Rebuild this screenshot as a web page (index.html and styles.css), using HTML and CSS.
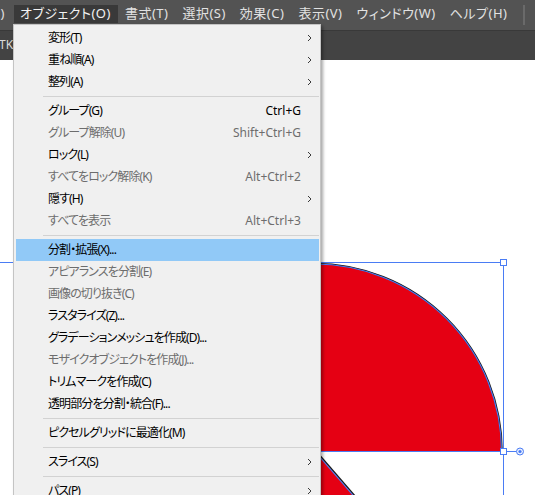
FILE: index.html
```html
<!DOCTYPE html>
<html lang="ja">
<head>
<meta charset="utf-8">
<title>Illustrator Object menu</title>
<link rel="stylesheet" href="styles.css">
</head>
<body>
<div class="app">
  <nav class="menubar">
    <span class="mb-item mb-cut"><span class="mb-cut-text">編集(E)</span></span>
    <span class="mb-item mb-active">オブジェクト(O)</span>
    <span class="mb-item">書式(T)</span>
    <span class="mb-item">選択(S)</span>
    <span class="mb-item">効果(C)</span>
    <span class="mb-item">表示(V)</span>
    <span class="mb-item">ウィンドウ(W)</span>
    <span class="mb-item">ヘルプ(H)</span>
    <span class="mb-sep"></span>
  </nav>
  <div class="tabbar"><span class="tab-title">TK/</span></div>
  <div class="canvas">
    <svg class="art" width="535" height="435" viewBox="0 0 535 435">
      <!-- lower shape -->
      <path class="fill" d="M315.4 391.5 L353.5 435.5 L200 435.5 L200 391.5 Z"/>
      <line class="edge-k" x1="316.4" y1="391.5" x2="354.5" y2="435.5"/>
      <line class="edge-b" x1="315.4" y1="392" x2="353.2" y2="435.5"/>
      <!-- upper quarter shape -->
      <path class="fill" d="M100 203.5 L314 203.5 A188 188 0 0 1 502 391.5 L100 391.5 Z"/>
      <path class="edge-k" d="M100 203.5 L314 203.5 A188 188 0 0 1 502 391.5"/>
      <path class="edge-b" d="M100 204 L314 204 A187.5 187.5 0 0 1 501.5 391.5 L100 391.5"/>
      <!-- bounding box -->
      <line class="bbox" x1="0" y1="202.5" x2="500.5" y2="202.5"/>
      <line class="bbox" x1="503.5" y1="205.5" x2="503.5" y2="388.5"/>
      <line class="bbox" x1="503.5" y1="394.5" x2="503.5" y2="435"/>
      <line class="bbox" x1="506.5" y1="391.5" x2="516.5" y2="391.5"/>
      <rect class="handle" x="500.5" y="199.5" width="6" height="6"/>
      <rect class="handle" x="500.5" y="388.5" width="6" height="6"/>
      <circle class="widget" cx="520" cy="391.5" r="3.5"/>
      <circle class="widget-dot" cx="520" cy="391.5" r="1.6"/>
    </svg>
  </div>

  <div class="dropdown">
    <div class="mi"><span class="ml">変形(T)</span><span class="ms"></span><span class="ma"><svg class="chev" viewBox="0 0 5 8"><path d="M1 1l3 3-3 3"/></svg></span></div>
    <div class="mi"><span class="ml">重ね順(A)</span><span class="ms"></span><span class="ma"><svg class="chev" viewBox="0 0 5 8"><path d="M1 1l3 3-3 3"/></svg></span></div>
    <div class="mi"><span class="ml">整列(A)</span><span class="ms"></span><span class="ma"><svg class="chev" viewBox="0 0 5 8"><path d="M1 1l3 3-3 3"/></svg></span></div>
    <div class="msep"></div>
    <div class="mi"><span class="ml">グループ(G)</span><span class="ms">Ctrl+G</span><span class="ma"></span></div>
    <div class="mi dis"><span class="ml">グループ解除(U)</span><span class="ms">Shift+Ctrl+G</span><span class="ma"></span></div>
    <div class="mi"><span class="ml">ロック(L)</span><span class="ms"></span><span class="ma"><svg class="chev" viewBox="0 0 5 8"><path d="M1 1l3 3-3 3"/></svg></span></div>
    <div class="mi dis"><span class="ml">すべてをロック解除(K)</span><span class="ms">Alt+Ctrl+2</span><span class="ma"></span></div>
    <div class="mi"><span class="ml">隠す(H)</span><span class="ms"></span><span class="ma"><svg class="chev" viewBox="0 0 5 8"><path d="M1 1l3 3-3 3"/></svg></span></div>
    <div class="mi dis"><span class="ml">すべてを表示</span><span class="ms">Alt+Ctrl+3</span><span class="ma"></span></div>
    <div class="msep"></div>
    <div class="mi hot"><span class="ml">分割・拡張(X)...</span><span class="ms"></span><span class="ma"></span></div>
    <div class="mi dis"><span class="ml">アピアランスを分割(E)</span><span class="ms"></span><span class="ma"></span></div>
    <div class="mi dis"><span class="ml">画像の切り抜き(C)</span><span class="ms"></span><span class="ma"></span></div>
    <div class="mi"><span class="ml">ラスタライズ(Z)...</span><span class="ms"></span><span class="ma"></span></div>
    <div class="mi"><span class="ml">グラデーションメッシュを作成(D)...</span><span class="ms"></span><span class="ma"></span></div>
    <div class="mi dis"><span class="ml">モザイクオブジェクトを作成(J)...</span><span class="ms"></span><span class="ma"></span></div>
    <div class="mi"><span class="ml">トリムマークを作成(C)</span><span class="ms"></span><span class="ma"></span></div>
    <div class="mi"><span class="ml">透明部分を分割・統合(F)...</span><span class="ms"></span><span class="ma"></span></div>
    <div class="msep"></div>
    <div class="mi"><span class="ml">ピクセルグリッドに最適化(M)</span><span class="ms"></span><span class="ma"></span></div>
    <div class="msep"></div>
    <div class="mi"><span class="ml">スライス(S)</span><span class="ms"></span><span class="ma"><svg class="chev" viewBox="0 0 5 8"><path d="M1 1l3 3-3 3"/></svg></span></div>
    <div class="msep"></div>
    <div class="mi"><span class="ml">パス(P)</span><span class="ms"></span><span class="ma"><svg class="chev" viewBox="0 0 5 8"><path d="M1 1l3 3-3 3"/></svg></span></div>
  </div>
</div>
</body>
</html>
```

FILE: styles.css
```css
* { box-sizing: border-box; }

html, body {
  margin: 0;
  padding: 0;
  background: #ffffff;
}

body {
  font-family: "Noto Sans", "Noto Sans CJK JP", sans-serif;
}

.app {
  position: relative;
  width: 535px;
  height: 495px;
  overflow: hidden;
  display: flex;
  flex-direction: column;
}

/* ---------- menu bar ---------- */
.menubar {
  flex: none;
  height: 30px;
  background: #535353;
  display: flex;
  align-items: flex-start;
  padding-top: 5px;
  white-space: nowrap;
  font-feature-settings: "palt";
}

.mb-item {
  flex: none;
  height: 18px;
  line-height: 17px;
  padding: 0 7px 0 7px;
  font-size: 13px;
  letter-spacing: 0.5px;
  color: #e2e2e2;
}

.mb-cut {
  width: 14px;
  padding: 0 9px 0 0;
  display: flex;
  justify-content: flex-end;
  overflow: hidden;
}

.mb-cut-text { flex: none; }

.mb-active {
  background: #393939;
  color: #f2f2f2;
  padding-left: 6px;
}

.mb-sep {
  flex: none;
  width: 2px;
  height: 20px;
  margin-left: auto;
  margin-right: 10px;
  background: #6a6a6a;
}

/* ---------- document tab bar ---------- */
.tabbar {
  flex: none;
  height: 30px;
  background: #434343;
  border-top: 1px solid #393939;
  padding: 2px 0 0 0;
  line-height: 20px;
  white-space: nowrap;
  overflow: hidden;
}

.tab-title {
  display: inline-block;
  margin-left: -1px;
  font-size: 12px;
  color: #dadada;
}

/* ---------- art board ---------- */
.canvas {
  flex: 1;
  background: #ffffff;
}

.art { display: block; }

.fill { fill: #e50013; stroke: none; }
.edge-k { fill: none; stroke: #1a1a1a; stroke-width: 1.6; }
.edge-b { fill: none; stroke: #4a7cf4; stroke-width: 1.1; }
.bbox { stroke: #4a7cf4; stroke-width: 1; }
.handle { fill: #ffffff; stroke: #4a7cf4; stroke-width: 1; }
.widget { fill: #e6edff; stroke: #4a7cf4; stroke-width: 1; }
.widget-dot { fill: #4a7cf4; }

/* ---------- drop-down menu ---------- */
.dropdown {
  position: absolute;
  left: 13px;
  top: 24px;
  width: 308px;
  background: #f0f0f0;
  border: 1px solid #c4c4c4;
  box-shadow: 2px 2px 3px rgba(0, 0, 0, 0.35);
  padding: 2px 0 3px 0;
  font-feature-settings: "palt";
}

.mi {
  display: grid;
  grid-template-columns: 1fr auto 18px;
  align-items: center;
  height: 22px;
  margin: 0 1px 0 2px;
  padding-left: 32px;
  font-size: 12px;
  line-height: 22px;
  color: #000000;
  white-space: nowrap;
}

.ml { letter-spacing: -0.9px; }

.mi.dis { color: #6d6d6d; }

.mi.hot { background: #91c9f7; }

.ms { text-align: right; }

.ma {
  display: flex;
  align-items: center;
  padding-left: 6px;
}

.chev {
  width: 5px;
  height: 8px;
  fill: none;
  stroke: #3a3a3a;
  stroke-width: 1;
}

.msep {
  height: 1px;
  margin: 3px 1px 3px 29px;
  background: #d2d2d2;
}
```
